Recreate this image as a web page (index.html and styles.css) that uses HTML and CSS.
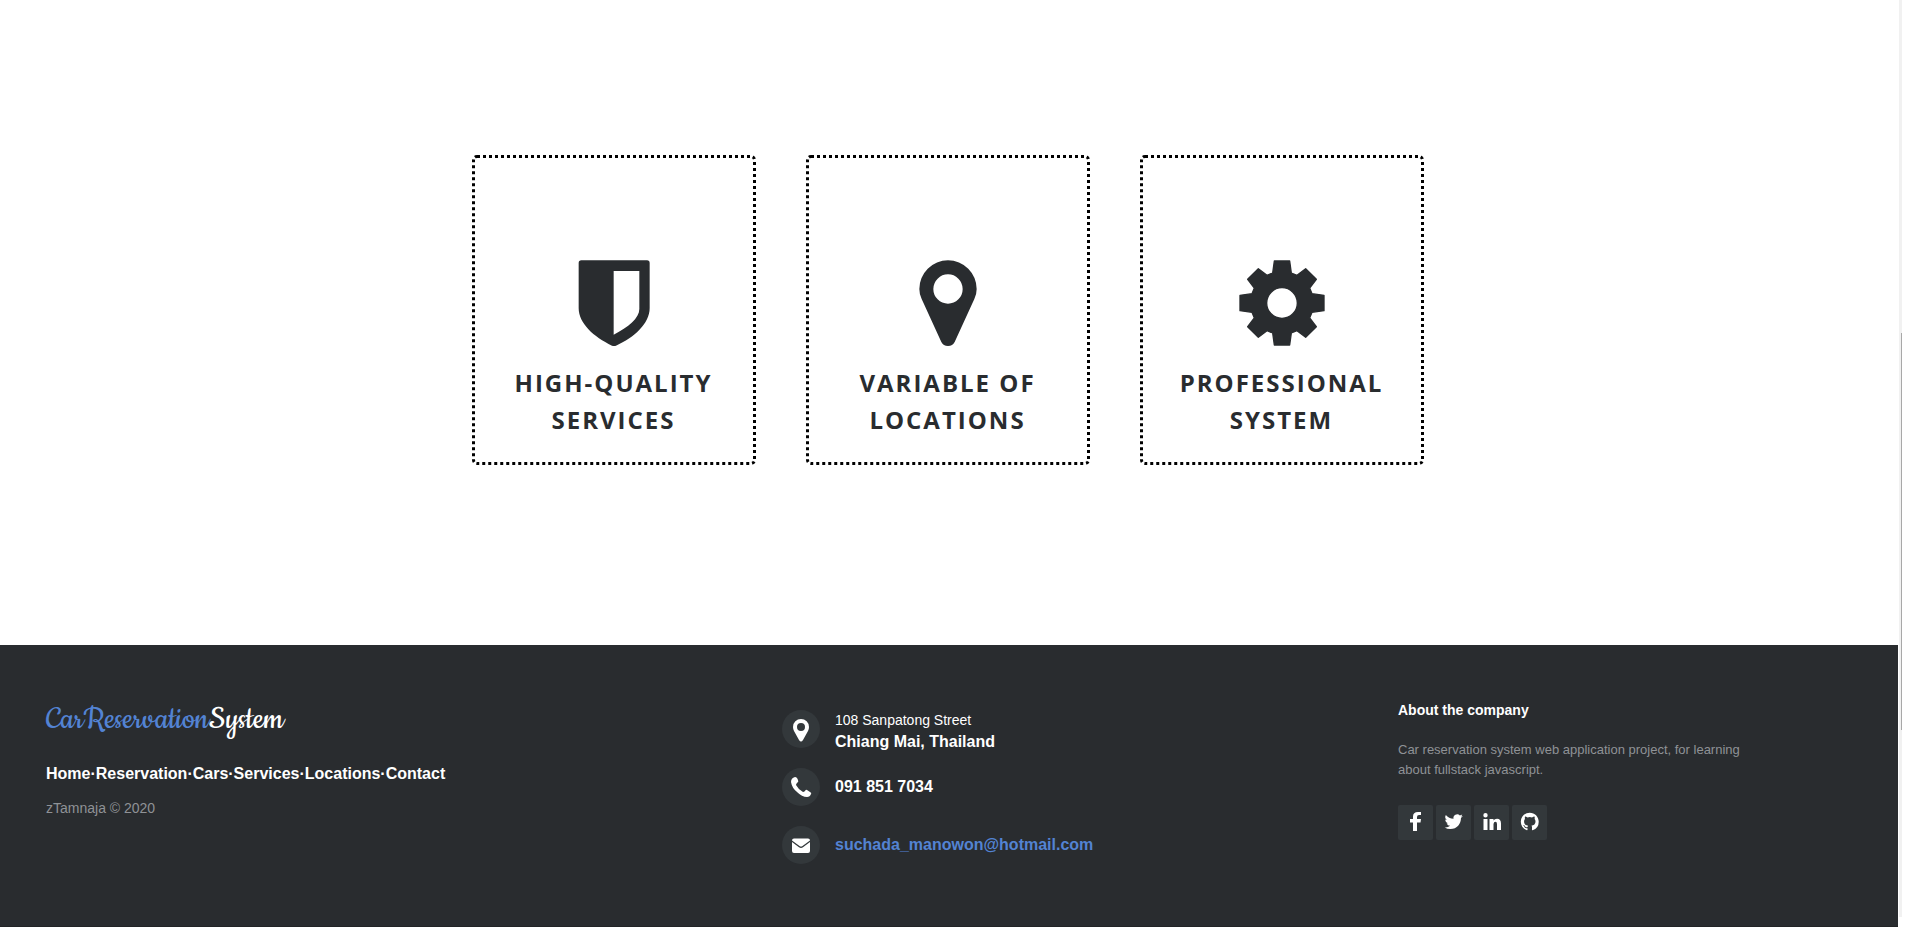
FILE: index.html
```html
<!DOCTYPE html>
<html lang="en">
<head>
<meta charset="utf-8">
<title>Car Reservation System</title>
<link rel="stylesheet" href="styles.css">
</head>
<body>
<div class="page">
  <main class="services">
    <article class="card">
      <svg class="card-icon" viewBox="0 0 258 258" aria-hidden="true"><path fill-rule="evenodd" d="M31 1H228Q236 1 236 9V145C236 190 190 233 135 257Q129 259 123 257C68 231 23 190 23 145V9Q23 1 31 1ZM128 33V224C172 202 205 174 205 147V33Z"/></svg>
      <h2 class="card-title">High-Quality Services</h2>
    </article>
    <article class="card">
      <svg class="card-icon" viewBox="0 0 258 258" aria-hidden="true"><path fill-rule="evenodd" d="M129 1A86 86 0 0 1 215 87Q215 103 208 117L149 246Q143 258 129 258T109 246L50 117Q43 103 43 87A86 86 0 0 1 129 1ZM129 43A44 44 0 1 0 129 131A44 44 0 1 0 129 43Z"/></svg>
      <h2 class="card-title">Variable of Locations</h2>
    </article>
    <article class="card">
      <svg class="card-icon gear" viewBox="-129 -129 258 258" aria-hidden="true"><path fill-rule="evenodd" d="M-23-126L23-126L28-90L45-83L71-103L103-71L83-45L90-28L126-23L126 23L90 28L83 45L103 71L71 103L45 83L28 90L23 126L-23 126L-28 90L-45 83L-71 103L-103 71L-83 45L-90 28L-126 23L-126-23L-90-28L-83-45L-103-71L-71-103L-45-83L-28-90ZM0-46A46 46 0 1 0 0 46A46 46 0 1 0 0-46Z"/></svg>
      <h2 class="card-title">Professional System</h2>
    </article>
  </main>
  <footer class="footer">
    <section class="brand">
      <h3 class="logo">CarReservation<span class="logo-end">System</span></h3>
      <nav class="links"><a href="#home">Home</a>·<a href="#reservation">Reservation</a>·<a href="#cars">Cars</a>·<a href="#services">Services</a>·<a href="#locations">Locations</a>·<a href="#contact">Contact</a></nav>
      <p class="copyright">zTamnaja © 2020</p>
    </section>
    <address class="contacts">
      <div class="contact">
        <span class="badge"><svg viewBox="0 0 38 38" aria-hidden="true"><path fill-rule="evenodd" d="M19 9a8 8 0 0 1 8 8q0 2-1 4l-5 9q-2 3-4 0l-5-9q-1-2-1-4a8 8 0 0 1 8-8zM19 13a4 4 0 1 0 0 8a4 4 0 1 0 0-8z"/></svg></span>
        <p class="contact-text two-line"><span class="street">108 Sanpatong Street</span>Chiang Mai, Thailand</p>
      </div>
      <div class="contact">
        <span class="badge"><svg viewBox="0 0 38 38" aria-hidden="true"><path d="M13 9Q9 10 9 14Q10 20 15 24Q20 29 25 29Q28 29 29 26Q30 25 28 24L25 22Q24 21 23 23Q22 24 21 24Q16 21 14 17Q14 16 15 15Q17 14 16 12L15 10Q14 9 13 9Z"/></svg></span>
        <p class="contact-text">091 851 7034</p>
      </div>
      <div class="contact">
        <span class="badge"><svg viewBox="0 0 38 38" aria-hidden="true"><path d="M12 12.500H26Q28 12.500 28 14.500L20.500 20Q19 21 17.500 20L10 14.500Q10 12.500 12 12.500ZM10 16L17 21.300Q19 22.500 21 21.300L28 16V25Q28 27 26 27H12Q10 27 10 25Z"/></svg></span>
        <p class="contact-text"><a class="mail" href="mailto:suchada_manowon@hotmail.com">suchada_manowon@hotmail.com</a></p>
      </div>
    </address>
    <section class="about">
      <h4 class="about-title">About the company</h4>
      <p class="about-text">Car reservation system web application project, for learning about fullstack javascript.</p>
      <div class="socials">
        <a class="social" href="#facebook" aria-label="Facebook"><svg viewBox="0 0 35 35"><path d="M23 7v3h-2q-2 0-2 2v2h4l-.5 3.500H19V26h-4v-8.500h-3V14h3v-2.500Q15 7 20 7z"/></svg></a>
        <a class="social" href="#twitter" aria-label="Twitter"><svg viewBox="0 0 24 24"><g transform="translate(5.900 5.200) scale(.52)"><path d="M23.950 4.570a10 10 0 0 1-2.820.77 4.960 4.960 0 0 0 2.160-2.720c-.95.550-2 .960-3.130 1.180a4.920 4.920 0 0 0-8.380 4.480C7.690 8.090 4.070 6.130 1.640 3.160a4.920 4.920 0 0 0 1.520 6.570 4.900 4.900 0 0 1-2.230-.61v.06a4.920 4.920 0 0 0 3.950 4.830 5 5 0 0 1-2.210.080 4.940 4.940 0 0 0 4.600 3.420A9.870 9.870 0 0 1 0 19.540a13.990 13.990 0 0 0 7.550 2.210c9.050 0 14-7.500 14-13.980 0-.21 0-.42-.02-.63a9.940 9.940 0 0 0 2.460-2.550z"/></g></svg></a>
        <a class="social" href="#linkedin" aria-label="LinkedIn"><svg viewBox="0 0 35 35"><path d="M9.500 14h4v11h-4zM11.500 8a2.200 2.200 0 1 1 0 4.400a2.200 2.200 0 0 1 0-4.400zM15.500 14h4v1.500Q20.500 13.700 23 13.700Q27 13.700 27 18.500V25h-4v-6q0-2.200-1.600-2.200T19.500 19v6h-4z"/></svg></a>
        <a class="social" href="#github" aria-label="GitHub"><svg viewBox="0 0 35 35"><g transform="translate(8.800 7.800) scale(1.120)"><path d="M8 0C3.580 0 0 3.580 0 8c0 3.540 2.290 6.530 5.470 7.590.4.070.55-.17.55-.38 0-.19-.01-.82-.01-1.490-2.010.37-2.530-.49-2.690-.94-.09-.23-.48-.94-.82-1.130-.28-.15-.68-.52-.01-.53.63-.01 1.080.58 1.230.82.72 1.210 1.870.87 2.330.66.070-.52.280-.87.510-1.070-1.780-.2-3.640-.89-3.640-3.950 0-.87.310-1.590.82-2.150-.08-.2-.36-1.020.08-2.120 0 0 .67-.21 2.200.82a7.600 7.600 0 0 1 4 0c1.530-1.040 2.200-.82 2.200-.82.440 1.100.160 1.920.080 2.120.510.560.820 1.270.820 2.150 0 3.070-1.870 3.750-3.650 3.950.290.250.540.730.540 1.480 0 1.070-.01 1.930-.01 2.200 0 .210.150.460.550.380A8.010 8.010 0 0 0 16 8c0-4.420-3.580-8-8-8z"/></g></svg></a>
      </div>
    </section>
  </footer>
</div>
<div class="track" aria-hidden="true"><div class="thumb"></div></div>
</body>
</html>
```
FILE: styles.css
```css
* { box-sizing: border-box; }
body {
  margin: 0;
  min-height: 100vh;
  display: flex;
  gap: 1px;
  padding-right: 18px;
  background: #fff;
  font-family: Arial, "Liberation Sans", sans-serif;
}
h2, h3, h4, p { margin: 0; }
a { color: inherit; text-decoration: none; }
svg { display: block; fill: currentColor; }

.page { flex: 1; display: flex; flex-direction: column; }

.services {
  flex: 1;
  display: flex;
  justify-content: center;
  align-items: flex-start;
  gap: 50px;
  padding: 155px 3px 180px 0;
}
.card {
  width: 284px;
  min-height: 310px;
  padding: 102px 24px 24px;
  border: 3px dotted #000;
  border-radius: 5px;
  color: #292c2f;
  text-align: center;
}
.card-icon { width: 86px; height: 86px; margin: 0 auto 18px; }
.gear { stroke: currentColor; stroke-width: 4px; stroke-linejoin: round; }
.card-title {
  font: 700 24px/37px "Segoe UI", "Open Sans", sans-serif;
  letter-spacing: 2px;
  text-transform: uppercase;
}

.footer {
  display: grid;
  grid-template-columns: 736fr 616fr 456fr;
  min-height: 282px;
  padding: 55px 44px 40px 46px;
  background: #292c2f;
  border-bottom: 1px solid #222426;
  color: #fff;
}
.logo {
  color: #5383d3;
  font: 400 36px/40px Cookie, cursive;
}
.logo-end { color: #fff; }
.links { margin-top: 24px; font-weight: 700; font-size: 16px; line-height: 20px; }
.copyright { margin-top: 14px; color: #8f9296; font-size: 14px; line-height: 20px; }

.contacts { padding-top: 10px; font-style: normal; }
.contact { display: flex; align-items: center; gap: 15px; height: 38px; margin-bottom: 20px; }
.contact:last-child { margin-bottom: 0; }
.badge { width: 38px; height: 38px; border-radius: 50%; background: #33383b; }
.contact-text { font-weight: 700; font-size: 16px; line-height: 22px; }
.two-line { padding-top: 4px; }
.street { display: block; font-weight: 400; font-size: 14px; }
.mail { color: #5383d3; }

.about-title { font-size: 14px; line-height: 20px; }
.about-text { max-width: 360px; margin-top: 20px; color: #8f9296; font-size: 13px; line-height: 20px; }
.socials { display: flex; gap: 3px; margin-top: 25px; }
.social { width: 35px; height: 35px; border-radius: 2px; background: #33383b; }

.track {
  display: flex;
  justify-content: flex-end;
  width: 3px;
  margin-bottom: 10px;
  padding: 333px 0 187px;
  background: #f1f1f1;
}
.thumb { width: 1px; background: #a8a8a8; }
```
